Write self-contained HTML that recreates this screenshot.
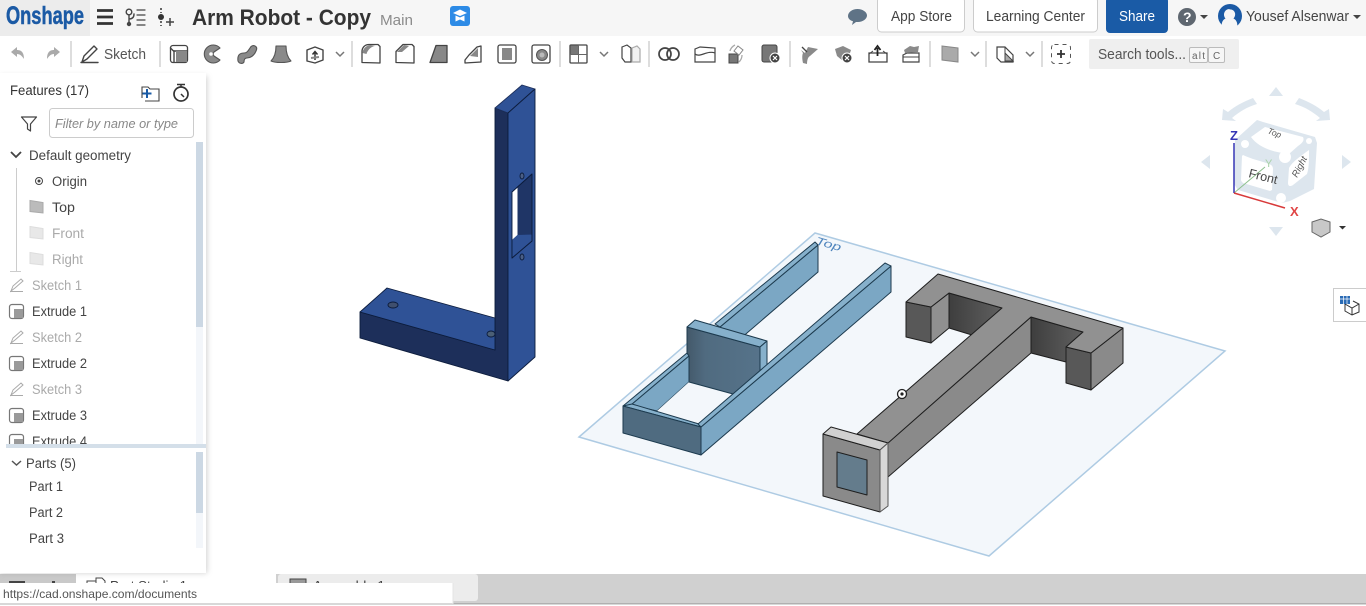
<!DOCTYPE html>
<html><head><meta charset="utf-8"><title>Arm Robot - Copy</title>
<style>
html,body{margin:0;padding:0;background:#fff;width:1366px;height:606px;overflow:hidden}
svg{display:block;position:absolute;left:0;top:0}
text{font-family:"Liberation Sans",sans-serif;fill:#444;font-size:13px}
.i{fill:none;stroke:#444;stroke-width:1.4;stroke-linejoin:round;stroke-linecap:round}
.g{fill:#8a8a8a;stroke:#555;stroke-width:1.1;stroke-linejoin:round}
.e{stroke:#0c1c3c;stroke-width:.9;stroke-linejoin:round}
.b{stroke:#1c3a4e;stroke-width:1;stroke-linejoin:round}
.k{stroke:#1e1e1e;stroke-width:1;stroke-linejoin:round}
.sep{stroke:#ddd;stroke-width:2}
.l{fill:#aaa}
</style></head><body>
<svg width="1366" height="606" viewBox="0 0 1366 606" xmlns="http://www.w3.org/2000/svg">
<defs>
<filter id="sh" x="-5%" y="-5%" width="115%" height="110%"><feGaussianBlur stdDeviation="3"/></filter>
<linearGradient id="pl" x1="0" x2="1" y1="0" y2="0"><stop offset="0" stop-color="#43596a"/><stop offset=".25" stop-color="#506b80"/><stop offset="1" stop-color="#56738a"/></linearGradient>
<linearGradient id="ds" x1="0" x2="1" y1="0" y2="0"><stop offset="0" stop-color="#3e3e3e"/><stop offset="1" stop-color="#606060"/></linearGradient>
</defs>

<!-- top bar -->
<rect width="1366" height="36" fill="#f6f6f6"/>
<rect width="90" height="36" fill="#ececec"/>
<text x="6" y="24" textLength="78" lengthAdjust="spacingAndGlyphs" style="fill:#1b5aa5;font-size:25px;font-weight:700;stroke:#1b5aa5;stroke-width:.5">Onshape</text>
<path d="M97 10.500h16M97 17h16M97 23.500h16" stroke="#333" stroke-width="2.800" fill="none"/>
<g class="i" fill="none">
<circle cx="129" cy="12" r="2.800"/><path d="M129 15v8M129 19q5 0 5-5"/><circle cx="129" cy="24" r="1.500" fill="#444"/>
<path d="M137 10h8M137 15h8M137 20h8M137 25h8" stroke-width="1.200"/>
</g>
<circle cx="161" cy="17" r="3" fill="#333"/><path d="M161 8v5M161 21v5" stroke="#333" stroke-width="1.500" stroke-dasharray="2 2"/><path d="M166 22h8M170 18v8" stroke="#444" stroke-width="1.500"/>
<text x="192" y="25" textLength="179" lengthAdjust="spacingAndGlyphs" style="font-size:22px;font-weight:700;fill:#333">Arm Robot - Copy</text>
<text x="380" y="25" textLength="33" lengthAdjust="spacingAndGlyphs" style="font-size:15px;fill:#8b8b8b">Main</text>
<rect x="450" y="6" width="20" height="20" rx="3" fill="#2d8be6"/>
<path d="M453 13l7-3.500 7 3.500-7 3z" fill="#fff"/><path d="M455.500 15.500v6l4.500-2 4.500 2v-6l-4.500 2z" fill="#fff"/>
<path d="M848 16c0-4 4.500-7 9.500-7s9.500 3 9.500 6.500-4.500 6.500-9 6.500h-2l-4 3 1-3.800c-3-.7-5-2.700-5-5.200z" fill="#5f7386"/>
<rect x="877.500" y="-3" width="87" height="35" rx="4" fill="#fff" stroke="#ccc"/>
<text x="891" y="21" textLength="61" lengthAdjust="spacingAndGlyphs" style="font-size:14.500px">App Store</text>
<rect x="973.500" y="-3" width="124" height="35" rx="4" fill="#fff" stroke="#ccc"/>
<text x="986" y="21" textLength="99" lengthAdjust="spacingAndGlyphs" style="font-size:14.500px">Learning Center</text>
<rect x="1106" y="-3" width="62" height="36" rx="4" fill="#1a5ba6"/>
<text x="1119" y="21" textLength="36" lengthAdjust="spacingAndGlyphs" style="font-size:14.500px;fill:#fff">Share</text>
<circle cx="1187" cy="17" r="9" fill="#5f6770"/>
<text x="1183" y="22" style="font-size:14px;font-weight:700;fill:#fff">?</text>
<path d="M1200 15h8l-4 4z" fill="#444"/>
<circle cx="1230" cy="16" r="12" fill="#1b5aa5"/>
<path d="M1222 28c-1-5 .5-8 3.500-9.500-4-5 1-11 5-9 4 0 6.500 5 3 9 3 1.500 4.500 4.500 3.500 9.500z" fill="#f6f6f6"/>
<text x="1246" y="21" textLength="103" lengthAdjust="spacingAndGlyphs" style="font-size:14.500px;fill:#444">Yousef Alsenwar</text>
<path d="M1353 15h8l-4 4z" fill="#444"/>

<!-- toolbar -->
<g fill="#aaa">
<path d="M11 52l6-5v3c4 0 7 2 7 9-2-3-4-5-7-5v3z"/>
<path d="M60 52l-6-5v3c-4 0-7 2-7 9 2-3 4-5 7-5v3z"/>
</g>
<line class="sep" x1="71" y1="41" x2="71" y2="67"/><line class="sep" x1="160" y1="41" x2="160" y2="67"/><line class="sep" x1="352" y1="41" x2="352" y2="67"/><line class="sep" x1="560" y1="41" x2="560" y2="67"/><line class="sep" x1="649" y1="41" x2="649" y2="67"/><line class="sep" x1="790" y1="41" x2="790" y2="67"/><line class="sep" x1="930" y1="41" x2="930" y2="67"/><line class="sep" x1="986" y1="41" x2="986" y2="67"/><line class="sep" x1="1042" y1="41" x2="1042" y2="67"/>
<path d="M82 62l2-6 10-10 3 3-10 10zM81 62.500h17" class="i"/>
<text x="104" y="59" textLength="42" lengthAdjust="spacingAndGlyphs" style="font-size:14.500px;fill:#555">Sketch</text>

<!-- feature icons -->
<g>
<rect x="170.500" y="45.500" width="17" height="17" rx="2.500" fill="#fff" stroke="#444" stroke-width="1.300"/><path d="M170.500 48l3 3h14" class="i" stroke-width="1"/><rect x="176" y="51" width="11" height="11" fill="#888"/><path d="M174 51v11" class="i" stroke-width="1"/>
<path d="M220 48a9 9 0 1 0 0 12l-6-4a3 3 0 0 1 0-4z" class="g"/><circle cx="211" cy="54" r="1.800" fill="#fff"/>
<path d="M238 61c-1-7 3-8 6-8s4-2 6-5c1-2 3-3 5-2s2 3 1 5c-2 5-6 7-9 7-2 0-3 1-3 4-1 2-5 2-6-1z" class="g"/>
<path d="M276 46h10c0 6 1 11 5 15-4 2-16 2-20 0 4-4 5-9 5-15z" class="g"/>
<path d="M307 50l8-3 8 3v10l-8 3-8-2z" class="i" stroke-width="1"/><path d="M315 52v8M312.500 54.500l2.500-3 2.500 3" stroke="#333" stroke-width="1.500" fill="none"/><path d="M311 58l8-1" stroke="#888" stroke-width="2"/>
<path d="M336 52l4 4 4-4" fill="none" stroke="#777" stroke-width="1.500"/>

<path d="M362 62.500v-11c0-4 3-7 7-7h9l2 2v16.500z" fill="#fff" stroke="#444" stroke-width="1.300" stroke-linejoin="round"/><path d="M362.500 53c0-4 4-8 8-8l5 1c-4 0-8 4-9 8z" fill="#888"/>
<path d="M396 62.500v-11l7-7h9l2 2v16.500z" fill="#fff" stroke="#444" stroke-width="1.300" stroke-linejoin="round"/><path d="M397 52l7-7 5 1-7 6z" fill="#888"/>
<path d="M430 62.500l6-17h11v17z" fill="#888" stroke="#444" stroke-width="1.300" stroke-linejoin="round"/>
<path d="M465 60l4-5 8-8 4-1v16l-16 1z" fill="#fff" stroke="#444" stroke-width="1.300" stroke-linejoin="round"/><path d="M470 56l8-8v9z" fill="#888"/>
<rect x="498" y="45" width="18" height="18" rx="2" fill="#fff" stroke="#444" stroke-width="1.300"/><rect x="502" y="48" width="10" height="12" fill="#888"/>
<rect x="532" y="45" width="18" height="18" rx="2" fill="#fff" stroke="#444" stroke-width="1.300"/><circle cx="542" cy="55" r="5.500" fill="#888" stroke="#555"/><circle cx="542" cy="55" r="2.500" fill="#bbb"/>

<rect x="570" y="45" width="17" height="18" rx="1" fill="#fff" stroke="#444" stroke-width="1.300"/><rect x="570.500" y="45.500" width="8" height="9" fill="#777"/><path d="M570 54.500h17M578.500 45v18" stroke="#666"/>
<path d="M600 52l4 4 4-4" fill="none" stroke="#777" stroke-width="1.500"/>
<path d="M622 47l5-2 4 3v14h-6l-3-4z" fill="#fff" stroke="#444" stroke-width="1.200"/><path d="M632 48l5-2 3 3v13h-8z" fill="#f1f1f1" stroke="#aaa" stroke-width="1.200"/>
<circle cx="665" cy="54" r="6" fill="none" stroke="#444" stroke-width="1.700"/><circle cx="673" cy="54" r="6" fill="none" stroke="#444" stroke-width="1.700"/>
<path d="M695 49l5-2 15 1v14h-20z" fill="#fff" stroke="#444" stroke-width="1.200"/><path d="M695 54c5 4 12-4 20-1" fill="none" stroke="#444" stroke-width="1.200"/>
<rect x="729" y="54" width="9" height="9" fill="#777" stroke="#444"/><path d="M738 46l5 4-4 5-5-4z" fill="#fff" stroke="#888"/><path d="M730 51q1-4 5-6M742 55q0 4-3 7" fill="none" stroke="#aaa" stroke-width="1.300"/>
<rect x="762" y="45" width="15" height="17" rx="2" fill="#777" stroke="#444"/><circle cx="775" cy="58" r="5" fill="#444" stroke="#fff"/><path d="M773 56l4 4M777 56l-4 4" stroke="#fff" stroke-width="1.200"/>

<path d="M801 50l4 3 3-6 10 2-8 7c-2 1-3 4-3 8l-4-1c-1-4-1-8 0-10z" fill="#8a8a8a"/><path d="M802 47l5 5" stroke="#444" stroke-width="1.300"/>
<path d="M835 49l8-3 8 4-2 6-6 5-6-5z" fill="#8a8a8a"/><circle cx="847" cy="58" r="5" fill="#444" stroke="#fff"/><path d="M845 56l4 4M849 56l-4 4" stroke="#fff" stroke-width="1.200"/>
<path d="M869 53l9 0 9 0v9h-18z" fill="#fff" stroke="#444" stroke-width="1.300"/><path d="M869 54l4-3M887 54l-4-3" stroke="#444"/><path d="M877.500 56v-8M874.500 50l3-4 3 4" stroke="#222" stroke-width="1.800" fill="none"/>
<path d="M903 55l4-2h12v9h-16z" fill="#fff" stroke="#444" stroke-width="1.200"/><path d="M903 57h16" stroke="#444"/><path d="M904 50l6-4 4 1 5-1-1 6-13 1z" fill="#8a8a8a"/>

<path d="M942 46l16 2v14l-16-2z" fill="#aaa" stroke="#888"/>
<path d="M971 52l4 4 4-4" fill="none" stroke="#777" stroke-width="1.500"/>
<path d="M997 47h8l8 8v7h-12l-4-4z" fill="#fff" stroke="#444" stroke-width="1.200"/><path d="M1005 47v13M1005 53l8 8h-8z" stroke="#444" fill="#aaa"/>
<path d="M1026 52l4 4 4-4" fill="none" stroke="#777" stroke-width="1.500"/>
<rect x="1051.500" y="44.500" width="19" height="19" rx="3" fill="none" stroke="#555" stroke-dasharray="4 4"/><path d="M1061 50v8M1057 54h8" stroke="#333" stroke-width="1.800"/>
</g>
<rect x="1089" y="39" width="150" height="30" rx="2" fill="#efefef"/>
<text x="1098" y="59" textLength="88" lengthAdjust="spacingAndGlyphs" style="font-size:14.500px;fill:#555">Search tools...</text>
<rect x="1189.500" y="47.500" width="18" height="15" rx="1.500" fill="#f6f6f6" stroke="#bbb"/><text x="1192" y="59" style="font-size:10px;fill:#666" textLength="13">alt</text>
<rect x="1208.500" y="47.500" width="16" height="15" rx="1.500" fill="#f6f6f6" stroke="#bbb"/><text x="1213" y="59" style="font-size:10px;fill:#666">C</text>

<!-- plane -->
<path d="M579 437L815 233 1225 351 989 556z" fill="#f3f7fb" stroke="#aecbe3" stroke-width="1.500"/>
<text transform="translate(815 244) rotate(16)" textLength="26" lengthAdjust="spacingAndGlyphs" style="font-size:11px;font-style:italic;fill:#4f85bd">Top</text>

<!-- blue bracket -->
<path d="M495 108V350L360 312V338L508 381V113z" fill="#1d2f5a" class="e"/>
<g class="e">
<path d="M495 108L522 85 535 89 508 113z" fill="#2f5296" stroke="#1d2f5a"/>
<path d="M508 113L535 89V357L508 381z" fill="#2f5296"/>
<path d="M387 288L495 318V350L360 312z" fill="#2f5296"/>
<path d="M512 192L532 174V241L512 258z" fill="#25427f"/>
<path d="M512 192L517.500 187V235L512 240z" fill="#fff" stroke="none"/>
<path d="M517.500 187L532 175V234L517.500 235z" fill="#1f3566" stroke="none"/>
<path d="M512 258V240L517.500 235H532V241z" fill="#2f5296" stroke="none"/>
<path d="M512 192L532 174V241L512 258z" fill="none"/>
<ellipse cx="522" cy="176" rx="2" ry="3" fill="#4b5f85"/>
<ellipse cx="522" cy="257" rx="2" ry="3" fill="#4b5f85"/>
<ellipse cx="393" cy="305" rx="5" ry="3" fill="#3f4f6e"/>
<ellipse cx="491" cy="334" rx="4" ry="3" fill="#4b5f75"/>
</g>

<!-- light blue part -->
<g class="b">
<path d="M720 327L818 245V272L733 345z" fill="#7ba7c4"/>
<path d="M715 324L815 242 818 245 720 327z" fill="#86b0cb"/>
<path d="M623 406L687 353 689 356 631 405z" fill="#86b0cb"/>
<path d="M631 405L689 356V382L657 411z" fill="#7ba7c4"/>
<path d="M657 411L689 382 732 394 700 423z" fill="#f3f7fb" stroke="none"/>
<path d="M623 406L632 404 699 424 701 427z" fill="#86b0cb"/>
<path d="M623 406L701 427V455L623 433z" fill="#4f6b80"/>
<path d="M701 427L891 266V292L701 455z" fill="#7ba7c4"/>
<path d="M687 327L760 347V374L733 394 689 382 689 356 687 353z" fill="url(#pl)"/>
<path d="M687 327L695 320 767 341 760 347z" fill="#86b0cb"/>
<path d="M760 347L767 341V367L760 374z" fill="#86b0cb"/>
<path d="M885 263L891 266 701 427 698 424z" fill="#86b0cb"/>
</g>

<!-- gray part -->
<g class="k">
<path d="M906 302L931 307V343L906 337z" fill="#585858"/>
<path d="M931 307L949 293V328L931 343z" fill="#909090"/>
<path d="M949 293L1002 308 972 335 949 328z" fill="url(#ds)"/>
<path d="M1031 317L1083 332 1066 347V362L1031 353z" fill="url(#ds)"/>
<path d="M1031 317V353L888 477V443z" fill="#8a8a8a"/>
<path d="M1066 347L1091 353V390L1066 383z" fill="#585858"/>
<path d="M1091 353L1123 328V363L1091 390z" fill="#8a8a8a"/>
<path d="M938 274L1123 328 1091 353 1066 347 1083 332 1031 317 888 443 857 434 1002 308 949 293 931 307 906 302z" fill="#919191"/>
<path d="M823 434L880 450V512L823 496z" fill="#8a8a8a"/>
<path d="M823 434L831 427 888 443 880 450z" fill="#d0d0d0"/>
<path d="M880 450L888 443V506L880 512z" fill="#d8d8d8" stroke="#555"/>
<path d="M837 452L867 460V495L837 487z" fill="#647c8c"/>
</g>
<circle cx="902" cy="394" r="4.500" fill="#fff" stroke="#222" stroke-width="1.300"/><circle cx="902" cy="394" r="1.600" fill="#222"/>

<!-- view cube -->
<g fill="#dde6ee">
<path d="M1276 87l7 9h-14zM1201 162l9-7v14zM1351 162l-9-7v14zM1276 236l-7-9h14z"/>
<path d="M1222 120l1-11 5 3c7-6 15-10 25-14l4 6c-10 3-18 8-25 14l4 3z"/>
<path d="M1330 120l-1-11-5 3c-7-6-15-10-25-14l-4 6c10 3 18 8 25 14l-4 3z"/>
<path d="M1263 122l52 15 2 6-3 46-24 12-8 2-44-13-4-6 1-44 22-20z"/>
</g>
<g fill="#fff">
<path d="M1251 137l14-10 38 10c2 4-2 7-5 9l-9 8c-16-2-30-6-38-17z"/>
<path d="M1243 155c8 4 18 6 26 9 3 1 4 3 4 5l-1 21-2 1-27-8c-1-1-2-2-2-3l1-24z"/>
<path d="M1309 150c0 10 0 18-2 24l-14 11c-3 2-5 1-5-2l1-15c2-4 6-8 20-18z"/>
<circle cx="1285" cy="157" r="6"/><circle cx="1245" cy="144" r="4"/><circle cx="1309" cy="141" r="3"/><circle cx="1281" cy="198" r="5"/>
</g>
<path d="M1234 193L1265 167" stroke="#8dc08d" stroke-width="1"/>
<path d="M1234 193V143" stroke="#3535b5" stroke-width="1.500"/>
<path d="M1234 193L1285 208" stroke="#d83a3a" stroke-width="1.500"/>
<text x="1230" y="140" style="font-size:13px;font-weight:700;fill:#3535b5">Z</text>
<text x="1290" y="216" style="font-size:13px;font-weight:700;fill:#e04545">X</text>
<text x="1265" y="167" style="font-size:11px;fill:#a8d2a8">Y</text>
<text transform="translate(1248 177) rotate(14)" style="font-size:12.500px;fill:#444">Front</text>
<text transform="translate(1267 133) rotate(22)" style="font-size:8.500px;font-style:italic;fill:#555">Top</text>
<text transform="translate(1297 178) rotate(-62)" style="font-size:9.500px;font-style:italic;fill:#555">Right</text>
<path d="M1312 222l9-3 9 3v10l-9 5-9-5z" fill="#c8c8c8" stroke="#666"/>
<path d="M1339 226h7l-3.500 3.500z" fill="#333"/>

<rect x="1333.500" y="288.500" width="40" height="33" fill="#fff" stroke="#ccc"/>
<path d="M1345 303v8l7 4 7-3v-8l-6-3M1352 308v7M1345 304l7 4 7-4" fill="none" stroke="#333" stroke-width="1"/>
<rect x="1340" y="296" width="10" height="8" fill="#2a6bb5"/><path d="M1340 299h10M1343.500 296v8M1347 296v8" stroke="#fff" stroke-width=".7"/>

<!-- bottom tabs -->
<rect x="0" y="574" width="1366" height="30" fill="#d0d0d0"/>
<rect x="0" y="603" width="1366" height="1.500" fill="#b0b0b0"/>
<rect x="0" y="574" width="76" height="29" fill="#c9c9c9"/>
<rect x="76" y="574" width="200" height="29" fill="#fff"/>
<rect x="278" y="574" width="200" height="27" rx="3" fill="#ececec"/>
<rect x="9" y="581" width="16" height="8" fill="#444"/><rect x="52" y="581" width="3" height="8" fill="#444"/>
<rect x="87" y="581" width="10" height="8" fill="#fff" stroke="#444"/><path d="M96 578h6l3 3v8h-9z" fill="#fff" stroke="#444"/>
<text x="110" y="590" textLength="77" lengthAdjust="spacingAndGlyphs" style="font-size:13px">Part Studio 1</text>
<rect x="290" y="579" width="16" height="10" fill="#999" stroke="#444"/>
<text x="313" y="590" textLength="72" lengthAdjust="spacingAndGlyphs" style="font-size:13px">Assembly 1</text>

<!-- sidebar -->
<rect x="0" y="76" width="207" height="497" fill="#888" opacity=".4" filter="url(#sh)"/>
<rect x="0" y="73" width="206" height="500" fill="#fff"/>
<text x="10" y="95" textLength="79" lengthAdjust="spacingAndGlyphs" style="font-size:13.500px;fill:#333">Features (17)</text>
<path d="M142 98v-11h6l2 2h9v12h-14" fill="none" stroke="#444" stroke-width="1.100"/><path d="M147 89v9M142.500 93.500h9" stroke="#1a5ba6" stroke-width="2"/>
<circle cx="181" cy="94" r="7" fill="none" stroke="#333" stroke-width="1.700"/><path d="M177 84.500h8M181 85v2M181 94l3 3" stroke="#333" stroke-width="1.500" fill="none"/>
<path d="M21.500 117h15l-6 7v7l-3-2v-5z" fill="none" stroke="#444" stroke-width="1.200" stroke-linejoin="round"/>
<rect x="49.500" y="108.500" width="144" height="29" rx="3" fill="#fff" stroke="#ccc"/>
<text x="55" y="128" textLength="123" lengthAdjust="spacingAndGlyphs" style="font-size:13px;font-style:italic;fill:#888">Filter by name or type</text>
<rect x="196" y="142" width="7" height="302" fill="#f3f6fa"/>
<rect x="196" y="142" width="7" height="185" fill="#ccd8e4"/>
<path d="M11 152l5 5 5-5" fill="none" stroke="#444" stroke-width="1.800"/>
<text x="29" y="160" textLength="102" lengthAdjust="spacingAndGlyphs" style="font-size:13.500px">Default geometry</text>
<path d="M16.500 168v103M10 271.500h11" stroke="#ccc" fill="none"/>
<circle cx="39" cy="181" r="3.500" fill="none" stroke="#444"/><circle cx="39" cy="181" r="1.500" fill="#444"/>
<text x="52" y="186" textLength="35" lengthAdjust="spacingAndGlyphs" style="font-size:13.500px">Origin</text>
<path d="M30 200.500l13 2v10.500l-13-1.500z" fill="#bbb" stroke="#aaa"/>
<text x="52" y="212" textLength="23" lengthAdjust="spacingAndGlyphs" style="font-size:13.500px">Top</text>
<path d="M30 226.500l13 2v10.500l-13-1.500z" fill="#e8e8e8" stroke="#ddd"/>
<text x="52" y="238" textLength="32" lengthAdjust="spacingAndGlyphs" class="l" style="font-size:13.500px">Front</text>
<path d="M30 252.500l13 2v10.500l-13-1.500z" fill="#e8e8e8" stroke="#ddd"/>
<text x="52" y="264" textLength="31" lengthAdjust="spacingAndGlyphs" class="l" style="font-size:13.500px">Right</text>

<path d="M11 291l2-5 8-7 2 2-8 7zM10 291.500h13M11 343l2-5 8-7 2 2-8 7zM10 343.500h13M11 395l2-5 8-7 2 2-8 7zM10 395.500h13" fill="none" stroke="#aaa" stroke-width="1"/>
<text x="32" y="290" textLength="50" lengthAdjust="spacingAndGlyphs" class="l" style="font-size:13.500px">Sketch 1</text>
<text x="32" y="316" textLength="55" lengthAdjust="spacingAndGlyphs" style="font-size:13.500px">Extrude 1</text>
<text x="32" y="342" textLength="50" lengthAdjust="spacingAndGlyphs" class="l" style="font-size:13.500px">Sketch 2</text>
<text x="32" y="368" textLength="55" lengthAdjust="spacingAndGlyphs" style="font-size:13.500px">Extrude 2</text>
<text x="32" y="394" textLength="50" lengthAdjust="spacingAndGlyphs" class="l" style="font-size:13.500px">Sketch 3</text>
<text x="32" y="420" textLength="55" lengthAdjust="spacingAndGlyphs" style="font-size:13.500px">Extrude 3</text>
<text x="32" y="446" textLength="55" lengthAdjust="spacingAndGlyphs" style="font-size:13.500px">Extrude 4</text>
<g fill="#fff" stroke="#777" stroke-width="1.200">
<rect x="9.500" y="304.500" width="14" height="14" rx="2.500"/><rect x="9.500" y="356.500" width="14" height="14" rx="2.500"/><rect x="9.500" y="408.500" width="14" height="14" rx="2.500"/><rect x="9.500" y="434.500" width="14" height="14" rx="2.500"/>
</g>
<g fill="#9a9a9a"><rect x="14" y="309" width="9" height="9"/><rect x="14" y="361" width="9" height="9"/><rect x="14" y="413" width="9" height="9"/><rect x="14" y="439" width="9" height="9"/></g>
<rect x="0" y="447" width="206" height="125" fill="#fff"/>
<rect x="6" y="444" width="200" height="4" fill="#d4dfe9"/>
<rect x="196" y="452" width="7" height="96" fill="#f3f6fa"/>
<rect x="196" y="452" width="7" height="61" fill="#ccd8e4"/>
<path d="M12 461l4.500 4 4.500-4" fill="none" stroke="#555" stroke-width="1.500"/>
<text x="26" y="468" textLength="50" lengthAdjust="spacingAndGlyphs" style="font-size:13.500px">Parts (5)</text>
<text x="29" y="491" textLength="34" lengthAdjust="spacingAndGlyphs" style="font-size:13.500px">Part 1</text>
<text x="29" y="517" textLength="34" lengthAdjust="spacingAndGlyphs" style="font-size:13.500px">Part 2</text>
<text x="29" y="543" textLength="35" lengthAdjust="spacingAndGlyphs" style="font-size:13.500px">Part 3</text>

<!-- status tooltip -->
<rect x="0" y="583" width="453" height="20.500" fill="#fff"/>
<path d="M453 583v21" stroke="#e4e4e4"/>
<text x="3" y="598" textLength="194" lengthAdjust="spacingAndGlyphs" style="font-size:12px;fill:#555">https://cad.onshape.com/documents</text>
</svg>
</body></html>
